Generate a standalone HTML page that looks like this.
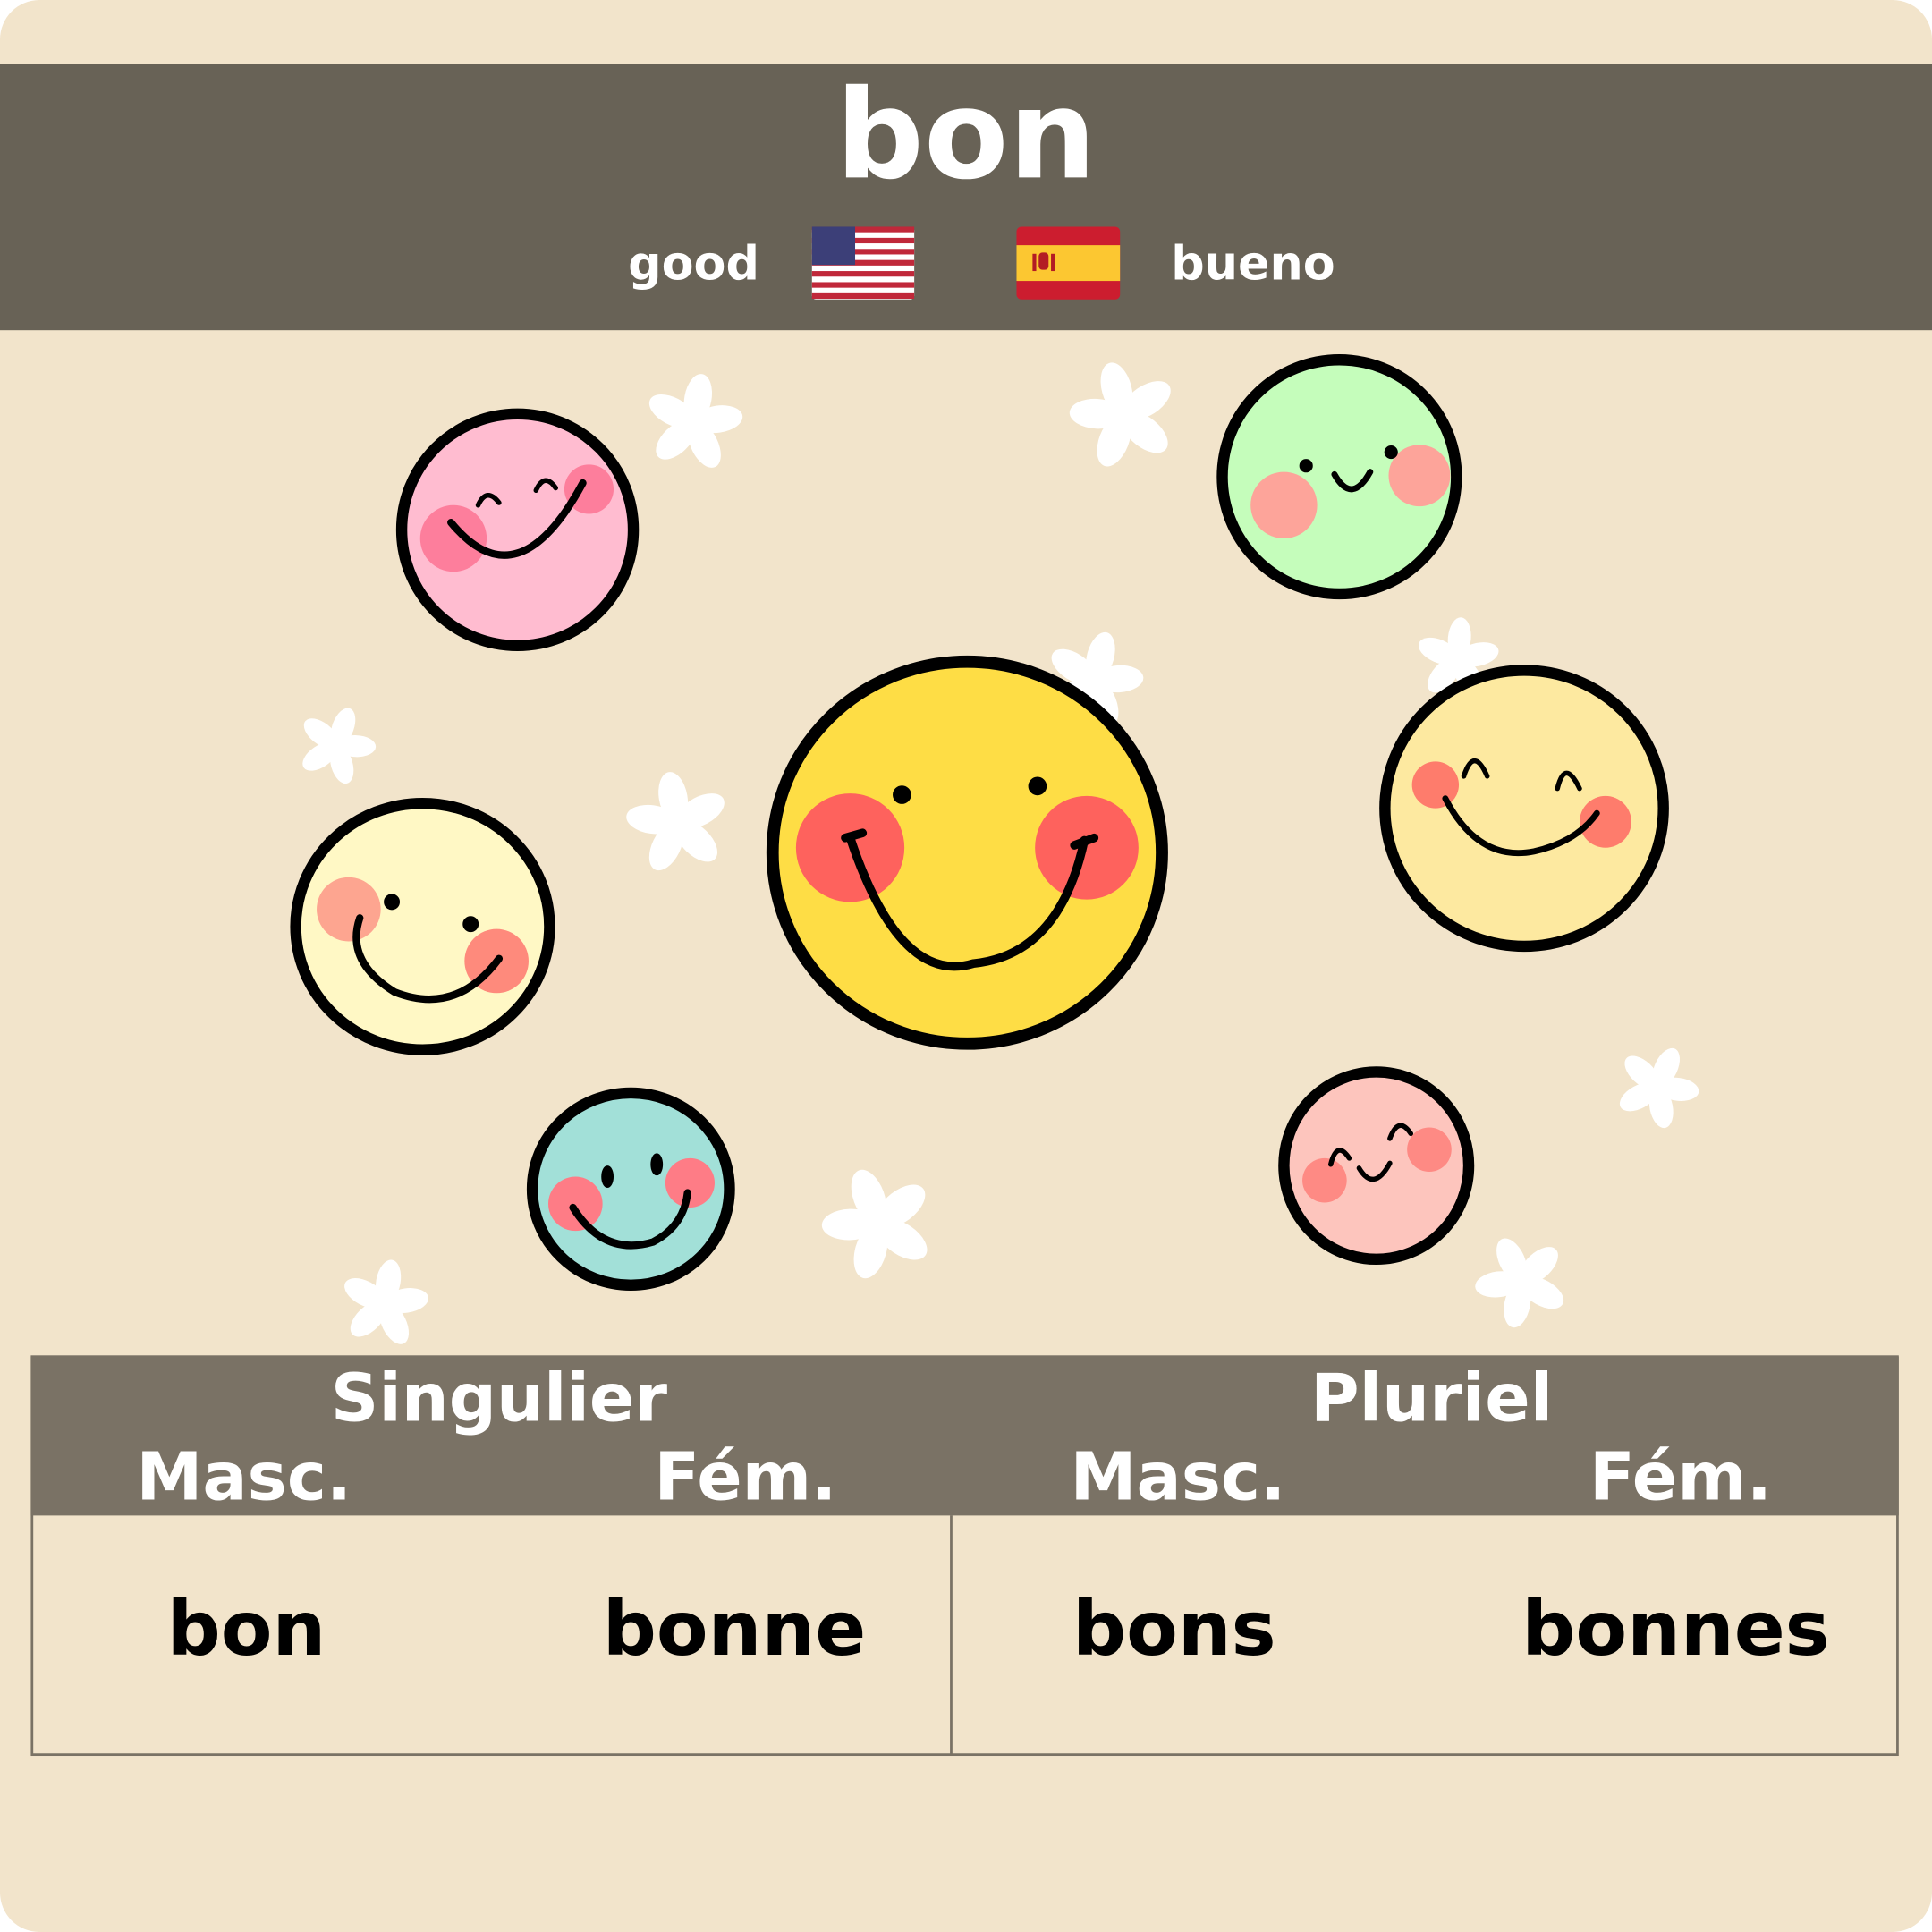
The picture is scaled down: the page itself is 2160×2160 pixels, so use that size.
<!DOCTYPE html>
<html><head><meta charset="utf-8"><style>
html,body{margin:0;padding:0;background:#fff;}
svg{display:block;}
text{font-family:"DejaVu Sans","Liberation Sans",sans-serif;font-weight:bold;}
</style></head><body>
<svg width="2160" height="2160" viewBox="0 0 1568 1568" xmlns="http://www.w3.org/2000/svg">
<defs>
<g id="fl" fill="#fff">
<ellipse cx="0" cy="-20" rx="11" ry="20"/>
<ellipse cx="0" cy="-20" rx="11" ry="20" transform="rotate(72)"/>
<ellipse cx="0" cy="-20" rx="11" ry="20" transform="rotate(144)"/>
<ellipse cx="0" cy="-20" rx="11" ry="20" transform="rotate(216)"/>
<ellipse cx="0" cy="-20" rx="11" ry="20" transform="rotate(288)"/>
<circle r="10"/>
</g>
</defs>
<rect x="0" y="0" width="1568" height="1568" rx="32" fill="#f2e4cb"/>
<rect x="0" y="52" width="1568" height="216" fill="#686256"/>
<text x="784" y="144" font-size="100" fill="#fff" text-anchor="middle">bon</text>
<text x="563" y="227" font-size="38" fill="#fff" text-anchor="middle">good</text>
<text x="1017" y="227" font-size="38" fill="#fff" text-anchor="middle">bueno</text>
<g>
<rect x="659" y="184" width="83" height="59" rx="3" fill="#fff"/>
<g fill="#c0283a">
<rect x="659" y="184" width="83" height="4.5"/><rect x="659" y="193" width="83" height="4.5"/><rect x="659" y="202" width="83" height="4.5"/><rect x="659" y="211" width="83" height="4.5"/><rect x="659" y="220" width="83" height="4.5"/><rect x="659" y="229" width="83" height="4.5"/><rect x="659" y="238" width="83" height="4.5"/>
</g>
<rect x="659" y="184" width="35" height="31" fill="#3c3f78"/>
</g>
<rect x="825" y="184" width="84" height="59" rx="4" fill="#cc1d2f"/>
<rect x="825" y="199" width="84" height="29" fill="#fcc731"/>
<rect x="838" y="206" width="3" height="14" fill="#b31c24"/><rect x="853" y="206" width="3" height="14" fill="#b31c24"/>
<rect x="843" y="205" width="8" height="14" rx="3" fill="#b31c24"/>
<use href="#fl" transform="translate(563,343) rotate(10)"/>
<use href="#fl" transform="translate(912,337) rotate(-15) scale(1.1)"/>
<use href="#fl" transform="translate(273,605) rotate(20) scale(0.8)"/>
<use href="#fl" transform="translate(550,668) rotate(-10) scale(1.05)"/>
<use href="#fl" transform="translate(888,552) rotate(15)"/>
<use href="#fl" transform="translate(1183,535) rotate(5) scale(0.85)"/>
<use href="#fl" transform="translate(1345,882) rotate(25) scale(0.85)"/>
<use href="#fl" transform="translate(713,993) rotate(-20) scale(1.15)"/>
<use href="#fl" transform="translate(312,1058) rotate(10) scale(0.9)"/>
<use href="#fl" transform="translate(1235,1040) rotate(-25) scale(0.95)"/>
<g stroke="#000" stroke-linecap="round" fill="none">
<circle cx="420" cy="430" r="94" fill="#ffbcd0" stroke-width="9"/>
<circle cx="368" cy="437" r="27" fill="#fd7e9c" stroke="none"/>
<circle cx="478" cy="397" r="20" fill="#fd7e9c" stroke="none"/>
<path d="M366 424 Q420 490 473 392" stroke-width="6"/>
<path d="M388 410 Q395 395 405 408 M435 398 Q442 383 451 396" stroke-width="4"/>
<circle cx="1087" cy="387" r="95" fill="#c5fdbb" stroke-width="9"/>
<circle cx="1042" cy="410" r="27" fill="#fda49a" stroke="none"/>
<circle cx="1152" cy="386" r="25" fill="#fda49a" stroke="none"/>
<path d="M1083 385 Q1097 410 1112 383" stroke-width="5"/>
<circle cx="1060" cy="378" r="4" fill="#000" stroke-width="3"/><circle cx="1129" cy="367" r="4" fill="#000" stroke-width="3"/>
<ellipse cx="785" cy="692" rx="158" ry="155" fill="#fedd45" stroke-width="10"/>
<circle cx="690" cy="688" r="44" fill="#fe625d" stroke="none"/>
<circle cx="882" cy="688" r="42" fill="#fe625d" stroke="none"/>
<path d="M690 680 Q730 800 790 782 Q860 775 880 682" stroke-width="7"/>
<path d="M686 680 L700 676 M872 686 L888 680" stroke-width="7"/>
<circle cx="732" cy="645" r="6" fill="#000" stroke-width="3"/><circle cx="842" cy="638" r="6" fill="#000" stroke-width="3"/>
<ellipse cx="1237" cy="656" rx="113" ry="112" fill="#fde9a0" stroke-width="9"/>
<circle cx="1165" cy="637" r="19" fill="#fe7c6c" stroke="none"/>
<circle cx="1303" cy="667" r="21" fill="#fe7c6c" stroke="none"/>
<path d="M1173 648 Q1200 700 1245 691 Q1280 683 1296 660" stroke-width="5"/>
<path d="M1188 630 Q1196 605 1207 630 M1264 640 Q1270 615 1282 640" stroke-width="4"/>
<ellipse cx="343" cy="752" rx="103" ry="100" fill="#fff8c5" stroke-width="9"/>
<circle cx="283" cy="738" r="26" fill="#fda590" stroke="none"/>
<circle cx="403" cy="780" r="26" fill="#fe8a7c" stroke="none"/>
<path d="M292 745 Q280 780 320 805 Q370 825 405 778" stroke-width="6"/>
<circle cx="318" cy="732" r="5" fill="#000" stroke-width="3"/><circle cx="382" cy="750" r="5" fill="#000" stroke-width="3"/>
<ellipse cx="512" cy="965" rx="80" ry="78" fill="#a2e0d8" stroke-width="9"/>
<circle cx="467" cy="977" r="22" fill="#fe7c86" stroke="none"/>
<circle cx="560" cy="960" r="20" fill="#fe7c86" stroke="none"/>
<path d="M465 980 Q490 1020 530 1008 Q555 995 558 968" stroke-width="6"/>
<ellipse cx="493" cy="955" rx="4" ry="8" fill="#000" stroke-width="2"/><ellipse cx="533" cy="945" rx="4" ry="8" fill="#000" stroke-width="2"/>
<ellipse cx="1117" cy="946" rx="75" ry="76" fill="#fdc5bd" stroke-width="9"/>
<circle cx="1075" cy="958" r="18" fill="#fe8a84" stroke="none"/>
<circle cx="1160" cy="933" r="18" fill="#fe8a84" stroke="none"/>
<path d="M1103 948 Q1115 968 1128 944" stroke-width="4"/>
<path d="M1080 945 Q1085 925 1095 940 M1128 924 Q1135 905 1145 920" stroke-width="4"/>
</g>
<rect x="26" y="1101" width="1514" height="323" fill="#f2e4cb" stroke="#7a7265" stroke-width="2"/>
<rect x="25" y="1101" width="1516" height="129" fill="#7a7265"/>
<line x1="772" y1="1230" x2="772" y2="1424" stroke="#7a7265" stroke-width="2"/>
<g fill="#fff" text-anchor="middle">
<text x="405" y="1153" font-size="54">Singulier</text>
<text x="1162" y="1153" font-size="54">Pluriel</text>
<text x="198" y="1217" font-size="54">Masc.</text>
<text x="605" y="1217" font-size="54">Fém.</text>
<text x="956" y="1217" font-size="54">Masc.</text>
<text x="1364" y="1217" font-size="54">Fém.</text>
</g>
<g fill="#000" text-anchor="middle" font-size="61">
<text x="200" y="1343">bon</text>
<text x="596" y="1343">bonne</text>
<text x="953" y="1343">bons</text>
<text x="1360" y="1343">bonnes</text>
</g>
</svg>
</body></html>
